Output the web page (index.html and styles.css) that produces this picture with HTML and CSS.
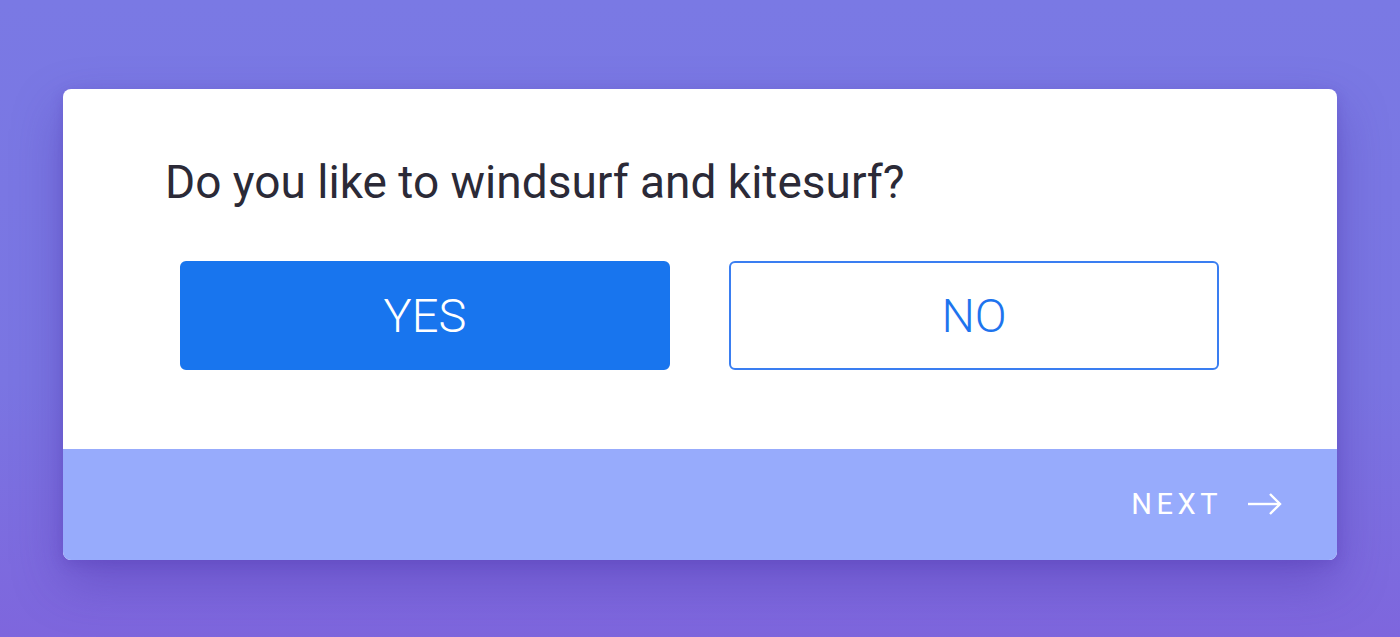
FILE: index.html
```html
<!DOCTYPE html>
<html lang="en">
<head>
<meta charset="utf-8">
<title>Question</title>
<link rel="stylesheet" href="styles.css">
</head>
<body>
  <div class="card">
    <div class="card-body">
      <h1 class="question">Do you like to windsurf and kitesurf?</h1>
      <div class="choices">
        <button class="choice choice-yes">YES</button>
        <button class="choice choice-no">NO</button>
      </div>
    </div>
    <div class="card-footer">
      <span class="next-label">NEXT</span>
      <svg class="next-arrow" width="34" height="24" viewBox="0 0 34 24" aria-hidden="true">
        <line x1="0" y1="12" x2="32" y2="12" stroke="#fff" stroke-width="2.4"/>
        <polyline points="22,2 32,12 22,22" fill="none" stroke="#fff" stroke-width="2.4"/>
      </svg>
    </div>
  </div>
</body>
</html>
```
FILE: styles.css
```css
* { box-sizing: border-box; }
html, body { height: 100%; }
body {
  margin: 0;
  padding: 89px 63px 0;
  background: linear-gradient(180deg, #7a79e4 0%, #7a75e2 60%, #7e66dd 100%);
  font-family: Roboto, "Liberation Sans", sans-serif;
  overflow: hidden;
}
.card {
  width: 1274px;
  border-radius: 8px;
  overflow: hidden;
  background: #fff;
  box-shadow: 0 22px 50px rgba(70, 40, 160, 0.35), 0 4px 14px rgba(70, 40, 160, 0.2);
}
.card-body {
  height: 360px;
  padding: 66px 118px 0 117px;
}
.question {
  margin: 0 0 52px -15px;
  font-size: 46px;
  line-height: 54px;
  font-weight: 400;
  color: #2b2a37;
}
.choices {
  display: flex;
  gap: 59px;
}
.choice {
  flex: 1;
  height: 109px;
  border-radius: 6px;
  font-family: Roboto, "Liberation Sans", sans-serif;
  font-size: 47px;
  font-weight: 300;
  cursor: pointer;
  padding: 0;
}
.choice-yes {
  background: #1875ee;
  border: 2px solid #1875ee;
  color: #fff;
}
.choice-no {
  background: #fff;
  border: 2px solid #3a7ef1;
  color: #1e74ee;
}
.card-footer {
  height: 111px;
  background: #97abfc;
  display: flex;
  align-items: center;
  justify-content: flex-end;
  padding: 0 55px 2px 0;
  gap: 26px;
}
.next-label {
  color: #fff;
  font-size: 29px;
  font-weight: 400;
  letter-spacing: 4.5px;
}
.next-arrow { display: block; }
```
